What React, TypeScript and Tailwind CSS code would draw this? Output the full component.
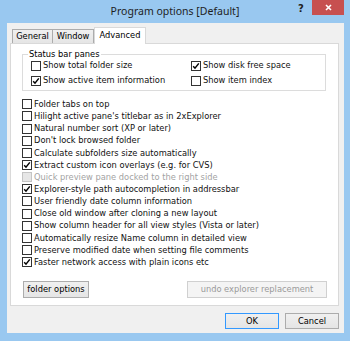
const ui = { fontFamily: '"DejaVu Sans", Tahoma, sans-serif' };

const groupLeft = [
  { label: "Show total folder size", checked: false },
  { label: "Show active item information", checked: true },
];
const groupRight = [
  { label: "Show disk free space", checked: true },
  { label: "Show item index", checked: false },
];

const options = [
  { label: "Folder tabs on top", checked: false },
  { label: "Hilight active pane's titlebar as in 2xExplorer", checked: false },
  { label: "Natural number sort (XP or later)", checked: false },
  { label: "Don't lock browsed folder", checked: false },
  { label: "Calculate subfolders size automatically", checked: false },
  { label: "Extract custom icon overlays (e.g. for CVS)", checked: true },
  { label: "Quick preview pane docked to the right side", checked: false, disabled: true },
  { label: "Explorer-style path autocompletion in addressbar", checked: true },
  { label: "User friendly date column information", checked: false },
  { label: "Close old window after cloning a new layout", checked: false },
  { label: "Show column header for all view styles (Vista or later)", checked: false },
  { label: "Automatically resize Name column in detailed view", checked: false },
  { label: "Preserve modified date when setting file comments", checked: false },
  { label: "Faster network access with plain icons etc", checked: true },
];

function CheckBox({ label, checked, disabled }: { label: string; checked: boolean; disabled?: boolean }) {
  return (
    <div className="flex h-[12.15px] items-center gap-[2px]">
      <div
        className={
          disabled
            ? "flex h-[10px] w-[10px] shrink-0 items-center justify-center border border-[#c4c4c4] bg-[#e6e6e6]"
            : "flex h-[10px] w-[10px] shrink-0 items-center justify-center border border-[#333333] bg-white"
        }
      >
        {checked && (
          <svg width="8" height="8" viewBox="0 0 8 8">
            <path d="M1.2 4.2 L3 6.2 L6.8 1.4" fill="none" stroke="#000" strokeWidth="1.5" />
          </svg>
        )}
      </div>
      <span className={disabled ? "whitespace-nowrap text-[8.3px] text-[#a3a3a3]" : "whitespace-nowrap text-[8.3px] text-[#111]"}>
        {label}
      </span>
    </div>
  );
}

export default function App() {
  return (
    <div className="flex h-[341px] w-[350px] flex-col bg-[#99c8f0]" style={ui}>
      {/* title bar */}
      <div className="relative flex h-[23px] items-center justify-center">
        <span className="text-[10.5px] text-[#1e1e1e]" style={{ fontFamily: '"Noto Sans", sans-serif' }}>
          Program options [Default]
        </span>
        <span className="absolute left-[298px] top-[1px] text-[10px] font-bold text-[#222]">?</span>
        <div className="absolute left-[312px] top-0 flex h-[15px] w-[32px] items-center justify-center bg-[#c75050]">
          <svg width="7" height="7" viewBox="0 0 7 7">
            <path d="M1 1 L6 6 M6 1 L1 6" stroke="#fff" strokeWidth="1.6" />
          </svg>
        </div>
      </div>

      {/* client area */}
      <div className="ml-[7px] mr-[6px] flex h-[310px] flex-col bg-[#f0f0f0]">
        {/* tabs */}
        <div className="flex h-[20px] items-end pl-[5px]">
          <div className="flex h-[14px] w-[41px] items-center justify-center border border-b-0 border-[#acacac] bg-gradient-to-b from-[#f0f0f0] to-[#e5e5e5] text-[8.3px]">
            General
          </div>
          <div className="flex h-[14px] w-[41px] items-center justify-center border border-b-0 border-l-0 border-[#acacac] bg-gradient-to-b from-[#f0f0f0] to-[#e5e5e5] text-[8.3px]">
            Window
          </div>
          <div className="relative z-10 -mb-px flex h-[17px] w-[52px] items-start justify-center border border-b-0 border-[#d9d9d9] bg-white pt-[1px] text-[8.3px]">
            Advanced
          </div>
        </div>

        {/* tab page */}
        <div className="ml-[3px] flex h-[263px] w-[329px] flex-col border border-[#d9d9d9] bg-white">
          <div className="relative ml-[11px] mt-[10px] h-[37px] w-[304px] border border-[#dcdcdc]">
            <span className="absolute left-[5px] top-[-7px] bg-white px-[1px] text-[8.3px] leading-[12px]">Status bar panes</span>
            <div className="flex pl-[8px] pt-[4.6px]">
              <div className="flex w-[160px] flex-col gap-[2.85px]">
                {groupLeft.map((o) => (
                  <CheckBox key={o.label} {...o} />
                ))}
              </div>
              <div className="flex flex-col gap-[2.85px]">
                {groupRight.map((o) => (
                  <CheckBox key={o.label} {...o} />
                ))}
              </div>
            </div>
          </div>

          <div className="ml-[11px] mt-[7.2px] flex flex-col">
            {options.map((o) => (
              <CheckBox key={o.label} {...o} />
            ))}
          </div>

          <div className="mt-[12.5px] flex justify-between pl-[12px] pr-[11px]">
            <div className="flex h-[17px] w-[66px] items-center justify-center border border-[#acacac] bg-gradient-to-b from-[#f0f0f0] to-[#e5e5e5] text-[8.3px]">
              folder options
            </div>
            <div className="flex h-[17px] w-[140px] items-center justify-center border border-[#d0d0d0] bg-[#f4f4f4] text-[8.3px] text-[#9a9a9a]">
              undo explorer replacement
            </div>
          </div>
        </div>

        {/* dialog buttons */}
        <div className="mt-[7px] flex justify-end gap-[6px] pr-[5px]">
          <div className="flex h-[16px] w-[54px] items-center justify-center border border-[#3399ff] bg-gradient-to-b from-[#f0f0f0] to-[#e5e5e5] text-[8.3px]">
            OK
          </div>
          <div className="flex h-[16px] w-[54px] items-center justify-center border border-[#acacac] bg-gradient-to-b from-[#f0f0f0] to-[#e5e5e5] text-[8.3px]">
            Cancel
          </div>
        </div>
      </div>
    </div>
  );
}
